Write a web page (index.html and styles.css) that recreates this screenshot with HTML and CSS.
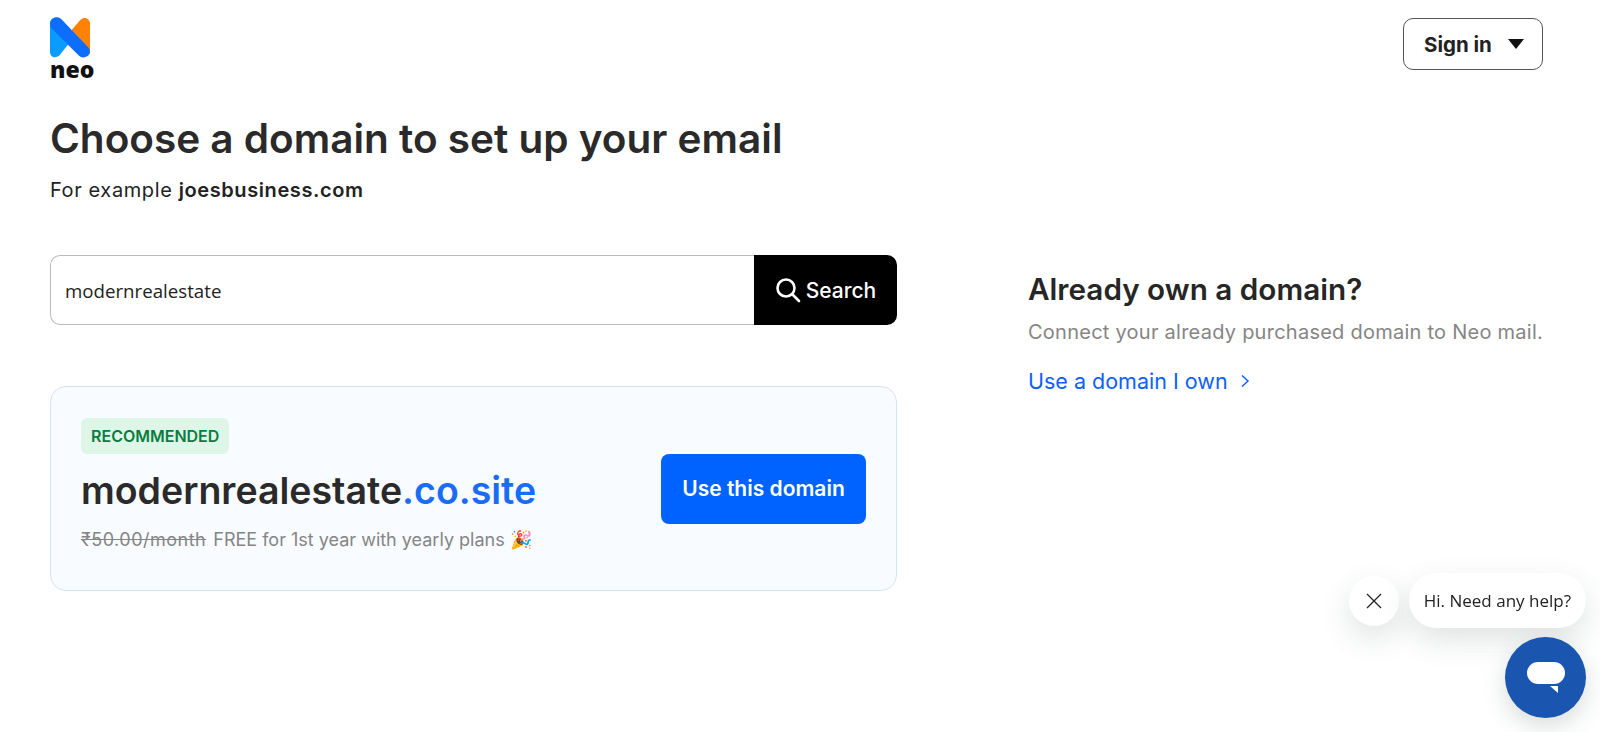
FILE: index.html
```html
<!DOCTYPE html>
<html lang="en">
<head>
    <meta charset="UTF-8">
    <meta name="viewport" content="width=device-width, initial-scale=1.0">
    <title>Choose a domain</title>
    <link rel="stylesheet" href="styles.css">
</head>
<body>
    <header class="topbar">
        <div class="logo">
            <svg class="logo-mark" width="40" height="41" viewBox="0 0 41 42">
                <path d="M0 7C0 1 6 -1 10 2L21 17L21 25L10 39C6 43 0 41 0 36Z" fill="#0a9bff"/>
                <path d="M41 7C41 1 35 -1 31 3L20 16L30 38L41 38Z" fill="#ff8205"/>
                <path d="M2 2.500C5 -0.500 9 -0.500 12 2.500L39 31C42 34 41 38 38.500 40C35.500 42 32 42 29.500 39.500L2 12C-0.500 9 -0.500 5 2 2.500Z" fill="#0d6efd"/>
            </svg>
            <span class="logo-text">neo</span>
        </div>
        <button class="signin" type="button">Sign in <span class="caret"></span></button>
    </header>

    <main class="content">
        <div class="title-block">
            <h1>Choose a domain to set up your email</h1>
            <p class="example">For example <strong>joesbusiness.com</strong></p>
        </div>
        <div class="columns">
            <section class="left">
                <form class="search">
                    <input class="search-input" type="text" value="modernrealestate">
                    <button class="search-btn" type="button">
                        <svg width="26" height="26" viewBox="0 0 26 26" fill="none" stroke="#fff" stroke-width="2.600" stroke-linecap="round">
                            <circle cx="11" cy="11" r="8.500"/>
                            <path d="M17.500 17.500L24 24"/>
                        </svg>
                        Search
                    </button>
                </form>
                <div class="card">
                    <div class="card-info">
                        <span class="badge">RECOMMENDED</span>
                        <div class="domain">modernrealestate<span class="tld">.co.site</span></div>
                        <p class="price"><s class="old-price">₹50.00/month</s> FREE for 1st year with yearly plans 🎉</p>
                    </div>
                    <button class="use-btn" type="button">Use this domain</button>
                </div>
            </section>
            <aside class="right">
                <h2>Already own a domain?</h2>
                <p class="connect">Connect your already purchased domain to Neo mail.</p>
                <a class="own-link" href="#">Use a domain I own
                    <svg width="10" height="14" viewBox="0 0 10 14" fill="none" stroke="#0d5fff" stroke-width="1.500"><path d="M2 1.500L8 7L2 12.500"/></svg>
                </a>
            </aside>
        </div>
    </main>

    <div class="chat">
        <div class="chat-row">
            <div class="chat-close">
                <svg width="16" height="16" viewBox="0 0 16 16" stroke="#222" stroke-width="1.300"><path d="M1 1L15 15M15 1L1 15"/></svg>
            </div>
            <div class="chat-bubble">Hi. Need any help?</div>
        </div>
        <div class="chat-btn">
            <svg width="40" height="34" viewBox="0 0 40 34">
                <rect x="1" y="1" width="38" height="22" rx="11" fill="#fff"/>
                <path d="M24 25L32 25L32 32Z" fill="#fff"/>
            </svg>
        </div>
    </div>
</body>
</html>
```

FILE: styles.css
```css
body {
    margin: 0;
    font-family: Inter, "Open Sans", sans-serif;
    color: #262626;
    background-color: #fff;
    height: 732px;
    overflow: hidden;
}
.topbar {
    display: flex;
    justify-content: space-between;
    align-items: flex-start;
    padding: 17px 57px 0 50px;
}
.logo {
    display: flex;
    flex-direction: column;
    width: 46px;
}
.logo-mark {
    display: block;
}
.logo-text {
    font-family: "Open Sans", sans-serif;
    font-weight: 800;
    font-size: 23px;
    line-height: 20px;
    color: #111;
    margin-top: 1px;
}
.signin {
    display: flex;
    align-items: center;
    gap: 16px;
    width: 140px;
    height: 52px;
    margin-top: 1px;
    padding: 0 0 0 20px;
    background-color: #fff;
    border: 1px solid #555;
    border-radius: 10px;
    font-family: Inter, sans-serif;
    font-size: 20.500px;
    font-weight: 700;
    color: #222;
}
.caret {
    width: 0;
    height: 0;
    border-left: 8px solid transparent;
    border-right: 8px solid transparent;
    border-top: 10px solid #111;
}
.content {
    padding: 0 50px;
}
.title-block {
    margin-top: 38px;
}
h1 {
    margin: 0;
    font-size: 40.500px;
    line-height: 44px;
    font-weight: 600;
    color: #2a2a2a;
}
.example {
    margin: 16px 0 0;
    font-size: 20px;
    line-height: 26px;
    letter-spacing: 0.600px;
    color: #222;
}
.example strong {
    font-weight: 600;
}
.columns {
    display: flex;
    margin-top: 52px;
}
.left {
    width: 847px;
    margin-right: 131px;
}
.search {
    display: flex;
    height: 70px;
}
.search-input {
    flex: 1;
    min-width: 0;
    padding: 0 14px;
    border: 1px solid #bbb;
    border-right: none;
    border-radius: 10px 0 0 10px;
    font-family: "Open Sans", sans-serif;
    font-size: 18.700px;
    color: #222;
}
.search-btn {
    display: flex;
    align-items: center;
    justify-content: center;
    gap: 5px;
    width: 143px;
    border: none;
    border-radius: 0 10px 10px 0;
    background-color: #000;
    color: #fff;
    font-family: Inter, sans-serif;
    font-size: 21px;
    font-weight: 500;
}
.card {
    display: flex;
    align-items: center;
    justify-content: space-between;
    height: 205px;
    box-sizing: border-box;
    margin-top: 61px;
    padding: 0 30px;
    background-color: #f8fbff;
    border: 1px solid #cfe6f8;
    border-radius: 16px;
}
.card-info {
    margin-bottom: 6px;
}
.badge {
    display: inline-block;
    padding: 0 10px;
    height: 36px;
    line-height: 36px;
    background-color: #def6e8;
    border-radius: 6px;
    color: #0a7d3e;
    font-size: 16px;
    font-weight: 600;
}
.domain {
    margin-top: 10px;
    font-size: 37.500px;
    line-height: 54px;
    font-weight: 600;
    color: #2a2a2a;
}
.tld {
    color: #1a6cf5;
}
.price {
    margin: 9px 0 0;
    font-size: 18px;
    line-height: 26px;
    color: #858585;
}
.old-price {
    letter-spacing: 0.500px;
    margin-right: 2px;
}
.use-btn {
    width: 205px;
    height: 70px;
    border: none;
    border-radius: 8px;
    background-color: #0063ff;
    color: #fff;
    font-family: Inter, sans-serif;
    font-size: 21px;
    font-weight: 600;
}
.right {
    padding-top: 14px;
}
h2 {
    margin: 0;
    font-size: 29.700px;
    line-height: 40px;
    font-weight: 600;
    color: #262626;
}
.connect {
    margin: 10px 0 0;
    font-size: 20px;
    line-height: 26px;
    letter-spacing: 0.250px;
    color: #858585;
}
.own-link {
    display: inline-flex;
    align-items: center;
    gap: 12px;
    margin-top: 22px;
    font-size: 21.500px;
    line-height: 28px;
    color: #0d5fff;
    text-decoration: none;
}
.chat {
    position: fixed;
    right: 14px;
    bottom: 14px;
    display: flex;
    flex-direction: column;
    align-items: flex-end;
    gap: 9px;
}
.chat-row {
    display: flex;
    align-items: center;
    gap: 10px;
}
.chat-close {
    display: flex;
    align-items: center;
    justify-content: center;
    width: 50px;
    height: 50px;
    background-color: #fff;
    border-radius: 50%;
    box-shadow: 0 12px 30px rgba(60, 80, 80, 0.16);
}
.chat-bubble {
    padding: 0 15px;
    height: 55px;
    line-height: 55px;
    background-color: #fff;
    border-radius: 28px;
    font-family: "Open Sans", sans-serif;
    font-size: 17px;
    color: #222;
    box-shadow: 0 12px 30px rgba(60, 80, 80, 0.16);
}
.chat-btn {
    display: flex;
    align-items: center;
    justify-content: center;
    width: 81px;
    height: 81px;
    background-color: #1a56b0;
    border-radius: 50%;
    box-shadow: 0 8px 24px rgba(60, 80, 80, 0.2);
}
```
